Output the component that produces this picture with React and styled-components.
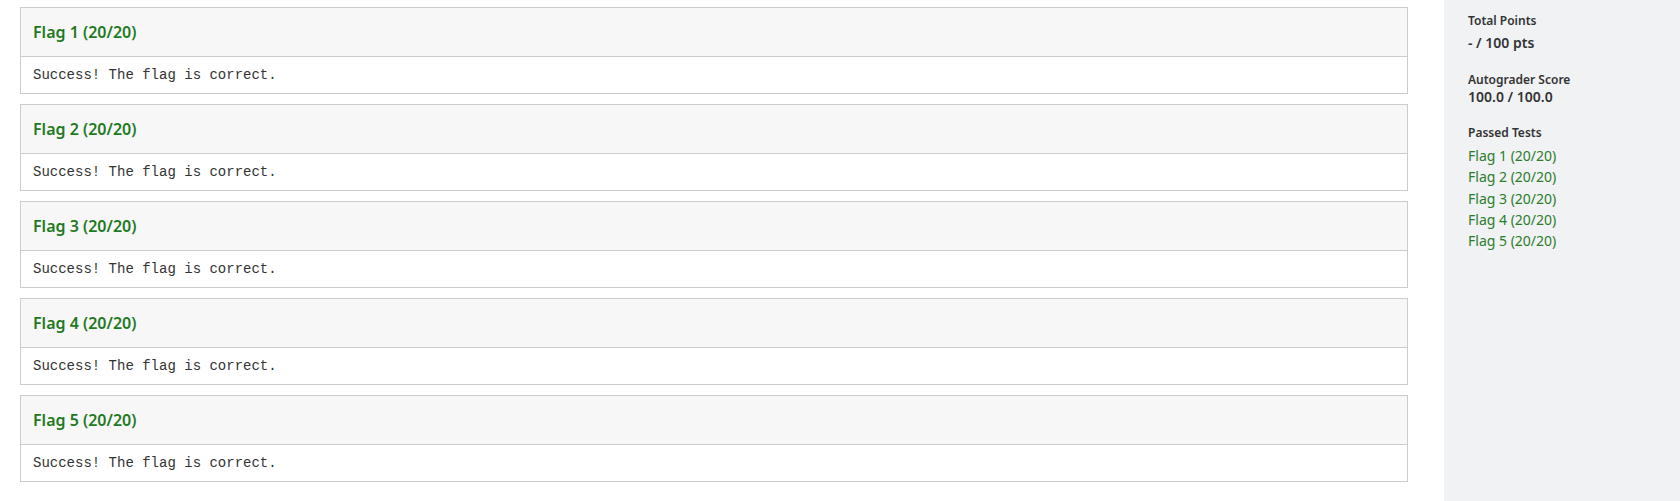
import React from 'react'
import styled, { createGlobalStyle } from 'styled-components'

const GlobalStyle = createGlobalStyle`
  html, body {
    margin: 0;
    padding: 0;
    background: #fff;
  }
  body {
    font-family: "Noto Sans", "Open Sans", "Liberation Sans", sans-serif;
    color: #333;
  }
`

const flags = [1, 2, 3, 4, 5].map((n) => ({
    name: `Flag ${n}`,
    score: '20/20',
    output: 'Success! The flag is correct.',
}))

const App = () => {
    return (
        <>
            <GlobalStyle />
            <Page>
                <Results>
                    {flags.map((flag) => (
                        <TestCard key={flag.name}>
                            <TestHeader>{flag.name} ({flag.score})</TestHeader>
                            <TestOutput>{flag.output}</TestOutput>
                        </TestCard>
                    ))}
                </Results>
                <Sidebar>
                    <Label>Total Points</Label>
                    <Value $gap={5}>- / 100 pts</Value>
                    <Label $gap={20}>Autograder Score</Label>
                    <Value $gap={0}>100.0 / 100.0</Value>
                    <Label $gap={19}>Passed Tests</Label>
                    <PassedList>
                        {flags.map((flag) => (
                            <li key={flag.name}>{flag.name} ({flag.score})</li>
                        ))}
                    </PassedList>
                </Sidebar>
            </Page>
        </>
    )
}

const Page = styled.div`
    display: flex;
    width: 1680px;
    min-height: 501px;
`

const Results = styled.main`
    flex: 1;
    display: flex;
    flex-direction: column;
    gap: 10px;
    padding: 7px 36px 0 20px;
`

const TestCard = styled.section`
    border: 1px solid #cccccc;
    background: #fff;
`

const TestHeader = styled.h3`
    box-sizing: border-box;
    margin: 0;
    height: 49px;
    display: flex;
    align-items: center;
    padding: 0 12px;
    background: #f7f7f7;
    border-bottom: 1px solid #cccccc;
    color: #1f7a1f;
    font-size: 16px;
    font-weight: 600;
`

const TestOutput = styled.pre`
    margin: 0;
    height: 36px;
    display: flex;
    align-items: center;
    padding: 0 12px;
    font-family: "Liberation Mono", "Courier New", monospace;
    font-size: 14px;
    color: #333;
`

const Sidebar = styled.aside`
    box-sizing: border-box;
    width: 236px;
    background: #f1f2f4;
    padding: 13px 24px;
`

const Label = styled.div`
    font-size: 12px;
    line-height: 16px;
    font-weight: 600;
    color: #333;
    margin-top: ${(p) => p.$gap || 0}px;
`

const Value = styled.div`
    font-size: 14px;
    line-height: 18px;
    font-weight: 600;
    color: #333;
    margin-top: ${(p) => p.$gap || 0}px;
`

const PassedList = styled.ul`
    list-style: none;
    margin: 4px 0 0;
    padding: 0;
    li {
        font-size: 14px;
        line-height: 21.25px;
        color: #2b7d2b;
    }
`

export default App
